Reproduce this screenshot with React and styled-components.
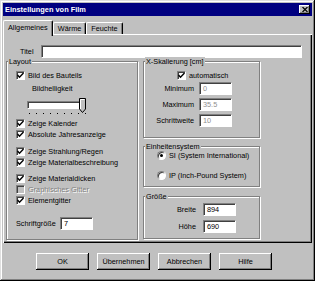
import React from 'react'
import styled, { createGlobalStyle } from 'styled-components'

const FACE = '#c0c0c0'

const GlobalStyle = createGlobalStyle`
  html, body {
    margin: 0;
    padding: 0;
    background: ${FACE};
  }
`

const Window = styled.div`
  width: 315px;
  height: 281px;
  box-sizing: border-box;
  padding: 3px;
  background: ${FACE};
  box-shadow: inset -1px -1px #000, inset 1px 1px #dfdfdf, inset -2px -2px #808080, inset 2px 2px #fff;
  display: flex;
  flex-direction: column;
  font-family: "Liberation Sans", Arial, sans-serif;
  font-size: 7.3px;
  color: #000;
`

const TitleBar = styled.div`
  height: 13px;
  background: #000080;
  color: #fff;
  font-weight: bold;
  font-size: 7.4px;
  display: flex;
  align-items: center;
  justify-content: space-between;
  padding-left: 2px;
`

const CloseBox = styled.div`
  width: 11px;
  height: 9px;
  margin-right: 2px;
  background: ${FACE};
  box-shadow: inset -1px -1px #000, inset 1px 1px #fff, inset -2px -2px #808080;
  display: flex;
  align-items: center;
  justify-content: center;
`

const TabStrip = styled.div`
  display: flex;
  align-items: flex-start;
  height: 16px;
  margin-top: 4px;
  margin-bottom: -2px;
  position: relative;
  z-index: 1;
`

const Tab = styled.div`
  box-sizing: border-box;
  height: ${p => (p.$active ? 16 : 12)}px;
  margin-top: ${p => (p.$active ? 0 : 2)}px;
  padding: ${p => (p.$active ? '2px 4px 0' : '1px 4px 0')};
  background: ${FACE};
  border-left: 1px solid #fff;
  border-top: 1px solid #fff;
  border-right: 1px solid #000;
  border-radius: 2px 2px 0 0;
  box-shadow: inset -1px 0 #808080;
  line-height: 9px;
`

const Panel = styled.div`
  height: 209px;
  box-sizing: border-box;
  padding: 10px 3px 0;
  box-shadow: inset 1px 1px #fff, inset -1px -1px #000, inset -2px -2px #808080;
`

const TitleRow = styled.div`
  display: flex;
  align-items: center;
  gap: 7px;
  height: 14px;
  padding-left: 14px;
  padding-right: 7px;
`

const Input = styled.div`
  box-sizing: border-box;
  width: ${p => (p.$w ? `${p.$w}px` : 'auto')};
  flex: ${p => (p.$w ? 'none' : 1)};
  height: ${p => p.$h || 13}px;
  background: #fff;
  border: 1px solid;
  border-color: #808080 #fff #fff #808080;
  box-shadow: inset 1px 1px #404040;
  padding: 1px 0 0 3px;
  line-height: 10px;
  color: ${p => (p.$disabled ? '#909090' : '#000')};
`

const Columns = styled.div`
  display: flex;
  gap: 5px;
  margin-top: 3px;
`

const Group = styled.div`
  position: relative;
  box-sizing: border-box;
  width: ${p => p.$w}px;
  height: ${p => p.$h}px;
  margin-top: ${p => p.$mt || 0}px;
  border: 1px solid #808080;
  box-shadow: 1px 1px 0 #fff, inset 1px 1px 0 #fff;
  padding: ${p => p.$pad || '0'};
  display: flex;
  flex-direction: column;
`

const Legend = styled.span`
  position: absolute;
  top: -5px;
  left: 1px;
  padding: 0 1px;
  background: ${FACE};
  line-height: 9px;
`

const RightCol = styled.div`
  display: flex;
  flex-direction: column;
`

const CheckRow = styled.div`
  display: flex;
  align-items: center;
  gap: 3px;
  height: 11px;
  margin-top: ${p => p.$mt || 0}px;
  padding-left: ${p => p.$pl || 0}px;
  color: ${p => (p.$disabled ? '#808080' : '#000')};
  text-shadow: ${p => (p.$disabled ? '1px 1px #fff' : 'none')};
`

const Box = styled.div`
  box-sizing: border-box;
  width: 9px;
  height: 9px;
  flex: none;
  background: ${p => (p.$disabled ? FACE : '#fff')};
  border: 1px solid;
  border-color: #808080 #fff #fff #808080;
  box-shadow: inset 1px 1px #404040;
  display: flex;
  align-items: center;
  justify-content: center;
`

const Radio = styled.div`
  box-sizing: border-box;
  width: 9px;
  height: 9px;
  flex: none;
  border-radius: 50%;
  background: #fff;
  border: 1px solid;
  border-color: #808080 #fff #fff #808080;
  box-shadow: inset 1px 1px #404040;
  display: flex;
  align-items: center;
  justify-content: center;

  &::after {
    content: '';
    width: 3px;
    height: 3px;
    border-radius: 50%;
    background: ${p => (p.$on ? '#000' : 'transparent')};
  }
`

const TextRow = styled.div`
  height: 11px;
  line-height: 11px;
  margin-top: ${p => p.$mt || 0}px;
  padding-left: ${p => p.$pl || 0}px;
`

const SliderRow = styled.div`
  display: flex;
  align-items: center;
  height: 14px;
  margin-top: ${p => p.$mt || 0}px;
  padding-left: 11px;
`

const Track = styled.div`
  box-sizing: border-box;
  width: 53px;
  height: 8px;
  background: #fff;
  border: 1px solid;
  border-color: #808080 #fff #fff #808080;
  box-shadow: inset 1px 1px #404040;
`

const Ticks = styled.div`
  display: flex;
  gap: 6px;
  height: 3px;
  align-items: center;
  padding-left: 13px;
`

const Tick = styled.span`
  width: 1px;
  height: 1px;
  background: #000;
`

const FieldRow = styled.div`
  display: grid;
  grid-template-columns: ${p => p.$lw}px 33px;
  column-gap: ${p => p.$gap}px;
  align-items: center;
  margin-top: ${p => p.$mt || 0}px;
`

const FieldLabel = styled.span`
  text-align: ${p => p.$align || 'right'};
`

const ButtonRow = styled.div`
  display: flex;
  gap: 8px;
  margin-top: 10px;
  padding-left: 33px;
`

const Button = styled.div`
  width: 53px;
  height: 17px;
  box-sizing: border-box;
  background: ${FACE};
  box-shadow: inset -1px -1px #000, inset 1px 1px #fff, inset -2px -2px #808080;
  display: flex;
  align-items: center;
  justify-content: center;
`

function Check({ on = true, disabled }) {
  return (
    <Box $disabled={disabled}>
      {on && (
        <svg width="7" height="7" viewBox="0 0 7 7">
          <path d="M0.5 3 L2.5 5.2 L6.5 1" stroke="#000" strokeWidth="1.4" fill="none" />
        </svg>
      )}
    </Box>
  )
}

function CheckItem({ label, on, disabled, mt, pl }) {
  return (
    <CheckRow $mt={mt} $pl={pl} $disabled={disabled}>
      <Check on={on} disabled={disabled} />
      <span>{label}</span>
    </CheckRow>
  )
}

// slider knob pointing down, win9x style
function Thumb() {
  return (
    <svg width="7" height="15" viewBox="0 0 7 15" style={{ marginLeft: -1 }}>
      <path d="M0.5 0.5 H6.5 V11 L3.5 14.5 L0.5 11 Z" fill={FACE} stroke="#000" strokeWidth="1" />
      <path d="M1.5 11 V1.5 H5.5" stroke="#fff" strokeWidth="1" fill="none" />
    </svg>
  )
}

export default function App() {
  return (
    <>
      <GlobalStyle />
      <Window>
        <TitleBar>
          <span>Einstellungen von Film</span>
          <CloseBox>
            <svg width="6" height="5" viewBox="0 0 6 5">
              <path d="M0.5 0 L5.5 5 M5.5 0 L0.5 5" stroke="#000" strokeWidth="1.2" />
            </svg>
          </CloseBox>
        </TitleBar>

        <TabStrip>
          <Tab $active>Allgemeines</Tab>
          <Tab>Wärme</Tab>
          <Tab>Feuchte</Tab>
        </TabStrip>

        <Panel>
          <TitleRow>
            <span>Titel</span>
            <Input />
          </TitleRow>

          <Columns>
            <Group $w={132} $h={179} $pad="8px 0 0 9px">
              <Legend>Layout</Legend>
              <CheckItem label="Bild des Bauteils" />
              <TextRow $mt={2} $pl={16}>Bildhelligkeit</TextRow>
              <SliderRow $mt={4}>
                <Track />
                <Thumb />
              </SliderRow>
              <Ticks>
                {Array.from({ length: 9 }).map((_, i) => <Tick key={i} />)}
              </Ticks>
              <CheckItem label="Zeige Kalender" mt={3} />
              <CheckItem label="Absolute Jahresanzeige" />
              <CheckItem label="Zeige Strahlung/Regen" mt={6} />
              <CheckItem label="Zeige Materialbeschreibung" />
              <CheckItem label="Zeige Materialdicken" mt={5} />
              <CheckItem label="Graphisches Gitter" on={false} disabled />
              <CheckItem label="Elementgitter" />
              <FieldRow $lw={40} $gap={4} $mt={11}>
                <FieldLabel $align="left">Schriftgröße</FieldLabel>
                <Input $w={33}>7</Input>
              </FieldRow>
            </Group>

            <RightCol>
              <Group $w={117} $h={77} $pad="8px 0 0 0">
                <Legend>X-Skalierung [cm]</Legend>
                <CheckItem label="automatisch" pl={33} />
                <FieldRow $lw={50} $gap={5} $mt={1}>
                  <FieldLabel>Minimum</FieldLabel>
                  <Input $w={33} $disabled>0</Input>
                </FieldRow>
                <FieldRow $lw={50} $gap={5} $mt={3}>
                  <FieldLabel>Maximum</FieldLabel>
                  <Input $w={33} $disabled>35.5</Input>
                </FieldRow>
                <FieldRow $lw={50} $gap={5} $mt={3}>
                  <FieldLabel>Schrittweite</FieldLabel>
                  <Input $w={33} $disabled>10</Input>
                </FieldRow>
              </Group>

              <Group $w={117} $h={41} $mt={8} $pad="3px 0 0 13px">
                <Legend>Einheitensystem</Legend>
                <CheckRow>
                  <Radio $on />
                  <span>SI (System International)</span>
                </CheckRow>
                <CheckRow $mt={9}>
                  <Radio />
                  <span>IP (Inch-Pound System)</span>
                </CheckRow>
              </Group>

              <Group $w={117} $h={43} $mt={9} $pad="6px 0 0 0">
                <Legend>Größe</Legend>
                <FieldRow $lw={52} $gap={7}>
                  <FieldLabel>Breite</FieldLabel>
                  <Input $w={33}>894</Input>
                </FieldRow>
                <FieldRow $lw={52} $gap={7} $mt={4}>
                  <FieldLabel>Höhe</FieldLabel>
                  <Input $w={33}>690</Input>
                </FieldRow>
              </Group>
            </RightCol>
          </Columns>
        </Panel>

        <ButtonRow>
          <Button>OK</Button>
          <Button>Übernehmen</Button>
          <Button>Abbrechen</Button>
          <Button>Hilfe</Button>
        </ButtonRow>
      </Window>
    </>
  )
}
